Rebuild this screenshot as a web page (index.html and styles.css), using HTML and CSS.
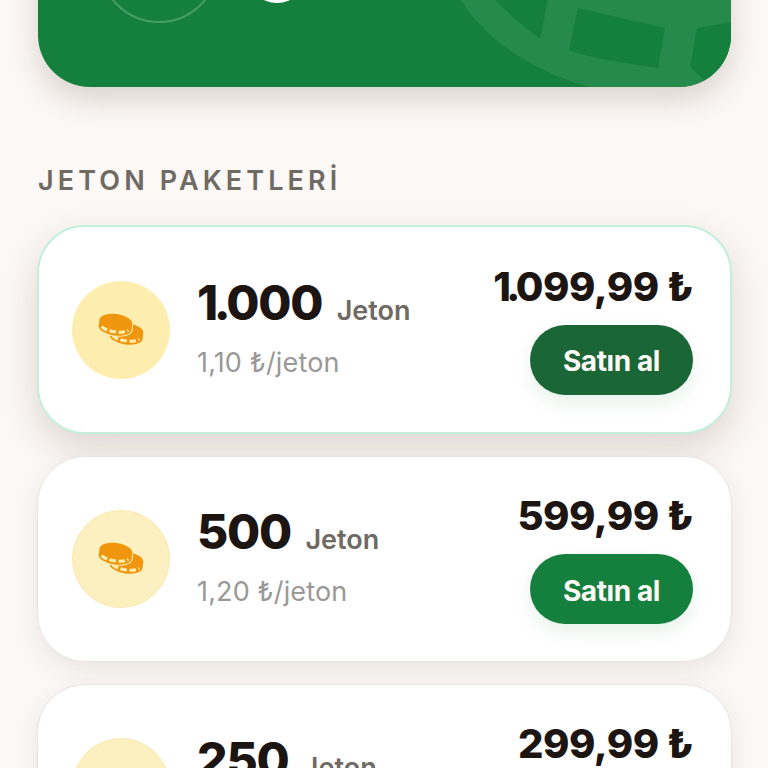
FILE: index.html
```html
<!DOCTYPE html>
<html lang="tr">
<head>
  <meta charset="UTF-8">
  <title>Jeton Paketleri</title>
  <link rel="stylesheet" href="styles.css">
</head>
<body>
  <div class="page">
    <div class="hero">
      <div class="hero-ring"></div>
      <div class="hero-dot"></div>
      <svg class="hero-mark" width="290" height="87" viewBox="0 0 290 87">
        <path class="mark-band" d="M20 0C40 35 90 72 150 87H290V0Z"/>
        <path class="mark-hole" d="M54 0H107L99 39C84 27 67 14 54 0Z"/>
        <path class="mark-hole" d="M137 8L224 28L217 68C185 63 155 60 128 50Z"/>
        <path class="mark-hole" d="M256 28L290 22V87H270L249 67Z"/>
      </svg>
    </div>

    <h2 class="section-title">JETON PAKETLERİ</h2>

    <div class="card card-featured">
      <div class="coin-badge">
        <svg width="44" height="32" viewBox="0 0 44 32"><use href="#coins"/></svg>
      </div>
      <div class="info">
        <div class="amount"><span class="tight">1.</span>000 <span class="unit">Jeton</span></div>
        <div class="rate">1,10 ₺/jeton</div>
      </div>
      <div class="buy">
        <div class="price"><span class="tight">1.</span>099,99 ₺</div>
        <button class="buy-btn buy-btn-dark">Satın al</button>
      </div>
    </div>

    <div class="card">
      <div class="coin-badge coin-badge-light">
        <svg width="44" height="32" viewBox="0 0 44 32"><use href="#coins"/></svg>
      </div>
      <div class="info">
        <div class="amount">500 <span class="unit">Jeton</span></div>
        <div class="rate">1,20 ₺/jeton</div>
      </div>
      <div class="buy">
        <div class="price">599,99 ₺</div>
        <button class="buy-btn">Satın al</button>
      </div>
    </div>

    <div class="card">
      <div class="coin-badge coin-badge-light">
        <svg width="44" height="32" viewBox="0 0 44 32"><use href="#coins"/></svg>
      </div>
      <div class="info">
        <div class="amount">250 <span class="unit">Jeton</span></div>
        <div class="rate">1,20 ₺/jeton</div>
      </div>
      <div class="buy">
        <div class="price">299,99 ₺</div>
        <button class="buy-btn">Satın al</button>
      </div>
    </div>
  </div>

  <svg class="sprite" width="0" height="0">
    <defs>
      <g id="coin-body">
        <ellipse cx="16.500" cy="7.500" rx="16.500" ry="7.500"/>
        <rect x="0" y="7.500" width="33" height="6.500"/>
        <ellipse cx="16.500" cy="14" rx="16.500" ry="7.500"/>
      </g>
      <path id="coin-edge" d="M3 14.500C8 19 25 19 30 14.500" fill="none" stroke="#fdeeb0" stroke-width="3" stroke-dasharray="6.500 2.500"/>
      <g id="coins">
        <g transform="translate(11 9) rotate(8 16.500 11)">
          <use href="#coin-body" fill="#f0960e"/>
          <use href="#coin-edge"/>
        </g>
        <g transform="rotate(8 16.500 11)">
          <use href="#coin-body" fill="#fdeeb0" stroke="#fdeeb0" stroke-width="2"/>
          <use href="#coin-body" fill="#f0960e"/>
          <use href="#coin-edge"/>
        </g>
      </g>
    </defs>
  </svg>
</body>
</html>
```
FILE: styles.css
```css
html, body {
  margin: 0;
  height: 768px;
  overflow: hidden;
}

body {
  background: #fcf8f5;
  font-family: Inter, "Liberation Sans", sans-serif;
  color: #1c1512;
}

.page {
  padding: 0 36px 0 37px;
}

.sprite {
  position: absolute;
}

.hero {
  position: relative;
  height: 200px;
  margin: -113px 1px 0;
  background: #15803d;
  border-radius: 52px;
  overflow: hidden;
  box-shadow: 0 12px 30px rgba(60, 40, 30, 0.18);
}

.hero-ring {
  position: absolute;
  left: 61px;
  bottom: 64px;
  box-sizing: border-box;
  width: 120px;
  height: 120px;
  border: 2px solid rgba(255, 255, 255, 0.22);
  border-radius: 50%;
}

.hero-dot {
  position: absolute;
  left: 209px;
  bottom: 84px;
  width: 60px;
  height: 60px;
  background: #fff;
  border-radius: 50%;
}

.hero-mark {
  position: absolute;
  right: 0;
  bottom: 0;
}

.mark-band {
  fill: #268a4c;
}

.mark-hole {
  fill: #15803d;
}

.section-title {
  margin: 76px 1px 26px;
  font-size: 27px;
  line-height: 36px;
  font-weight: 600;
  letter-spacing: 4.1px;
  color: #6f6a64;
}

.card {
  display: flex;
  align-items: center;
  box-sizing: border-box;
  height: 206px;
  margin-bottom: 22px;
  padding: 0 38px 0 34px;
  background: #fff;
  border: 1px solid #e8e4e1;
  border-radius: 48px;
  box-shadow: 0 8px 24px rgba(60, 40, 30, 0.09);
}

.card-featured {
  height: 209px;
  padding: 0 37px 0 33px;
  border: 2px solid #c2efdc;
  box-shadow: 0 14px 36px rgba(60, 40, 30, 0.16);
}

.coin-badge {
  display: flex;
  align-items: center;
  justify-content: center;
  flex: none;
  width: 98px;
  height: 98px;
  background: #fdeeb0;
  border-radius: 50%;
}

.coin-badge svg {
  overflow: visible;
}

.coin-badge-light {
  box-sizing: border-box;
  background: #fdf0c0;
  border: 1px solid #fae9ad;
}

.info {
  flex: 1;
  margin: 0 0 7px 27px;
}

.amount {
  font-size: 48px;
  line-height: 58px;
  font-weight: 800;
  letter-spacing: -1.2px;
}

.tight {
  letter-spacing: -4.4px;
}

.unit {
  margin-left: 5px;
  font-size: 27px;
  font-weight: 600;
  letter-spacing: 0;
  color: #6f6a64;
}

.rate {
  margin-top: 7px;
  font-size: 27px;
  line-height: 32px;
  letter-spacing: 0.15px;
  color: #9a9896;
}

.buy {
  display: flex;
  flex-direction: column;
  align-items: flex-end;
  gap: 16px;
}

.price {
  font-size: 40px;
  line-height: 44px;
  font-weight: 800;
  letter-spacing: -0.5px;
}

.price .tight {
  letter-spacing: -4.6px;
}

.buy-btn {
  width: 163px;
  height: 70px;
  padding: 3px 0 0;
  background: #15803d;
  border: none;
  border-radius: 35px;
  font-family: inherit;
  font-size: 28px;
  font-weight: 700;
  letter-spacing: -0.4px;
  color: #fbfaf6;
  box-shadow: 0 8px 18px rgba(21, 128, 61, 0.1);
}

.buy-btn-dark {
  background: #1a6636;
}
```
